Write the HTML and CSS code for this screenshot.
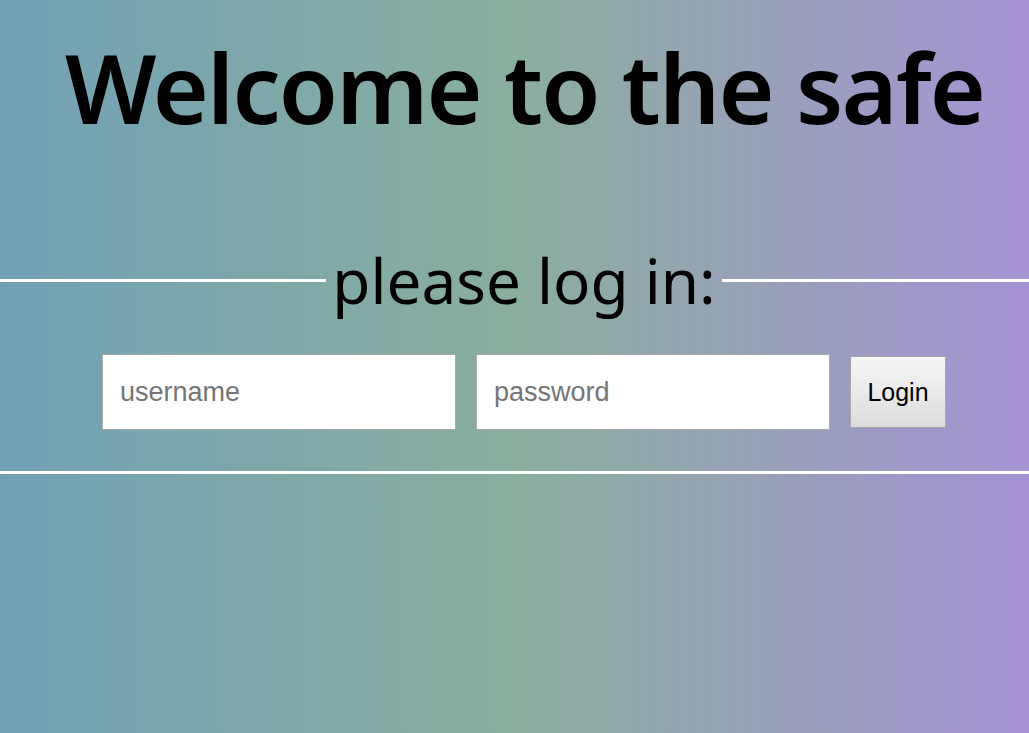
FILE: index.html
```html
<!DOCTYPE html>
<html>
<head>
<meta charset="utf-8">
<link rel="stylesheet" href="styles.css">
</head>
<body>
<h1 class="title">Welcome to the safe</h1>
<form class="login">
  <fieldset class="box">
    <legend class="legend">please log in:</legend>
    <div class="row">
      <input class="field" type="text" placeholder="username">
      <input class="field" type="password" placeholder="password">
      <button class="btn" type="button">Login</button>
    </div>
  </fieldset>
</form>
</body>
</html>
```

FILE: styles.css
```css
html, body {
  margin: 0;
  padding: 0;
  height: 100%;
}
body {
  background: linear-gradient(to right, #72a1b6 0%, #8aae9e 50%, #a693d4 100%);
  font-family: "Noto Sans", sans-serif;
  overflow: hidden;
}
.title {
  margin: 0;
  padding: 27px 0 0 20px;
  text-align: center;
  font-size: 96px;
  font-weight: 600;
  line-height: 120px;
  color: #000;
  letter-spacing: -1.8px;
}
.login {
  margin-top: 103px;
}
.box {
  margin: 0;
  border: none;
  border-top: 3px solid #fff;
  border-bottom: 3px solid #fff;
  padding: 0 0 41px 19px;
}
.legend {
  margin: 0 auto;
  padding: 0 6px;
  font-size: 62px;
  line-height: 60px;
  font-weight: normal;
  color: #000;
}
.row {
  display: flex;
  justify-content: center;
  align-items: center;
  gap: 20px;
  padding-top: 44px;
}
.field {
  box-sizing: border-box;
  width: 354px;
  height: 76px;
  border: 1px solid #a9a9a9;
  background: #fff;
  padding: 0 17px;
  font-family: "Liberation Sans", Arial, sans-serif;
  font-size: 27px;
  color: #000;
  outline: none;
}
.field::placeholder {
  color: #757575;
}
.btn {
  box-sizing: border-box;
  width: 96px;
  height: 72px;
  border: 1px solid #a9a9a9;
  background: linear-gradient(to bottom, #f6f6f6, #dcdcdc);
  font-family: "Liberation Sans", Arial, sans-serif;
  font-size: 25px;
  color: #000;
  padding: 0;
}
```
